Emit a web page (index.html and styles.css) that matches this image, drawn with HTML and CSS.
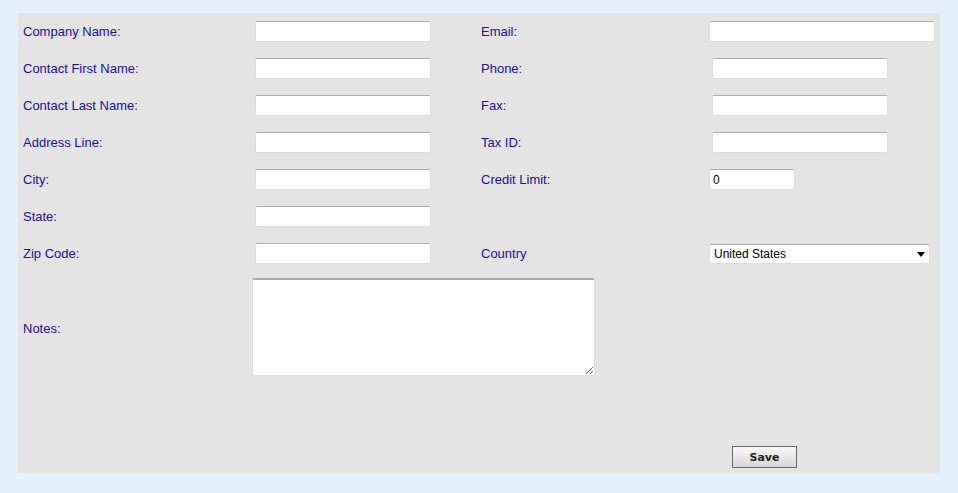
FILE: index.html
```html
<!DOCTYPE html>
<html lang="en">
<head>
  <meta charset="UTF-8" />
  <title>Customer</title>
  <link rel="stylesheet" href="styles.css">
</head>
<body>
  <form class="customer-form">
    <label class="field-label">Company Name:</label>
    <input type="text" class="field-input">
    <label class="field-label">Email:</label>
    <input type="text" class="field-input wide">

    <label class="field-label">Contact First Name:</label>
    <input type="text" class="field-input">
    <label class="field-label">Phone:</label>
    <input type="text" class="field-input shifted">

    <label class="field-label">Contact Last Name:</label>
    <input type="text" class="field-input">
    <label class="field-label">Fax:</label>
    <input type="text" class="field-input shifted">

    <label class="field-label">Address Line:</label>
    <input type="text" class="field-input">
    <label class="field-label">Tax ID:</label>
    <input type="text" class="field-input shifted">

    <label class="field-label">City:</label>
    <input type="text" class="field-input">
    <label class="field-label">Credit Limit:</label>
    <input type="text" class="field-input short" value="0">

    <label class="field-label">State:</label>
    <input type="text" class="field-input">
    <span></span>
    <span></span>

    <label class="field-label">Zip Code:</label>
    <input type="text" class="field-input">
    <label class="field-label">Country</label>
    <div class="select-wrap">
      <select class="field-select">
        <option>United States</option>
        <option>Canada</option>
        <option>Mexico</option>
      </select>
    </div>

    <label class="field-label">Notes:</label>
    <textarea class="field-notes"></textarea>
    <span></span>

    <span></span>
    <span></span>
    <span></span>
    <div class="actions">
      <button type="button" class="save-btn">Save</button>
    </div>
  </form>
</body>
</html>
```

FILE: styles.css
```css
:root {
  --page-bg: #e6f1fe;
  --panel-bg: #e4e4e4;
  --label: #1d0f92;
  --border-top: #ababab;
  --border: #dcdcdc;
}

html, body {
  margin: 0;
  padding: 0;
  background: var(--page-bg);
  font-family: "Liberation Sans", Arial, sans-serif;
}

.customer-form {
  margin: 13px 18px;
  padding: 8px 5px 5px 5px;
  background: var(--panel-bg);
  display: grid;
  grid-template-columns: 232px 226px 228px 1fr;
  grid-template-rows: repeat(7, 21px) 96px 76px;
  row-gap: 16px;
  align-items: center;
}

.field-label {
  font-size: 13px;
  color: var(--label);
}

.field-input {
  box-sizing: border-box;
  width: 176px;
  height: 21px;
  margin: 0;
  padding: 1px 3px;
  font-family: "Liberation Sans", Arial, sans-serif;
  font-size: 12px;
  color: #000;
  background: #fff;
  border: 1px solid var(--border);
  border-top-color: var(--border-top);
  border-radius: 2px;
  outline: none;
}

.field-input.wide {
  width: 226px;
}

.field-input.shifted {
  margin-left: 3px;
}

.field-input.short {
  width: 86px;
}

/* country dropdown with a drawn arrow */
.select-wrap {
  position: relative;
  width: 221px;
  height: 20px;
}

.field-select {
  box-sizing: border-box;
  width: 100%;
  height: 20px;
  margin: 0;
  padding: 0 4px;
  -webkit-appearance: none;
  appearance: none;
  font-family: "Liberation Sans", Arial, sans-serif;
  font-size: 12px;
  color: #000;
  background: #fff;
  border: 1px solid var(--border);
  border-top-color: var(--border-top);
  border-radius: 2px;
  outline: none;
}

.select-wrap::after {
  content: "";
  position: absolute;
  right: 5px;
  top: 8px;
  border-left: 4px solid transparent;
  border-right: 4px solid transparent;
  border-top: 5px solid #000;
  pointer-events: none;
}

.field-notes {
  grid-column: 2 / span 2;
  box-sizing: border-box;
  width: 343px;
  height: 98px;
  margin: -2px 0 0 -3px;
  background: #fff;
  border: 1px solid var(--border);
  border-top: 2px solid var(--border-top);
  border-radius: 2px;
  resize: both;
  outline: none;
}

.actions {
  align-self: end;
  padding-left: 23px;
}

.save-btn {
  width: 65px;
  height: 22px;
  padding: 0;
  font-family: "DejaVu Sans", Tahoma, sans-serif;
  font-size: 11px;
  font-weight: bold;
  color: #222;
  background: linear-gradient(#fafafa, #d6d6d6);
  border: 1px solid #666;
  border-radius: 0;
  cursor: pointer;
}
```
